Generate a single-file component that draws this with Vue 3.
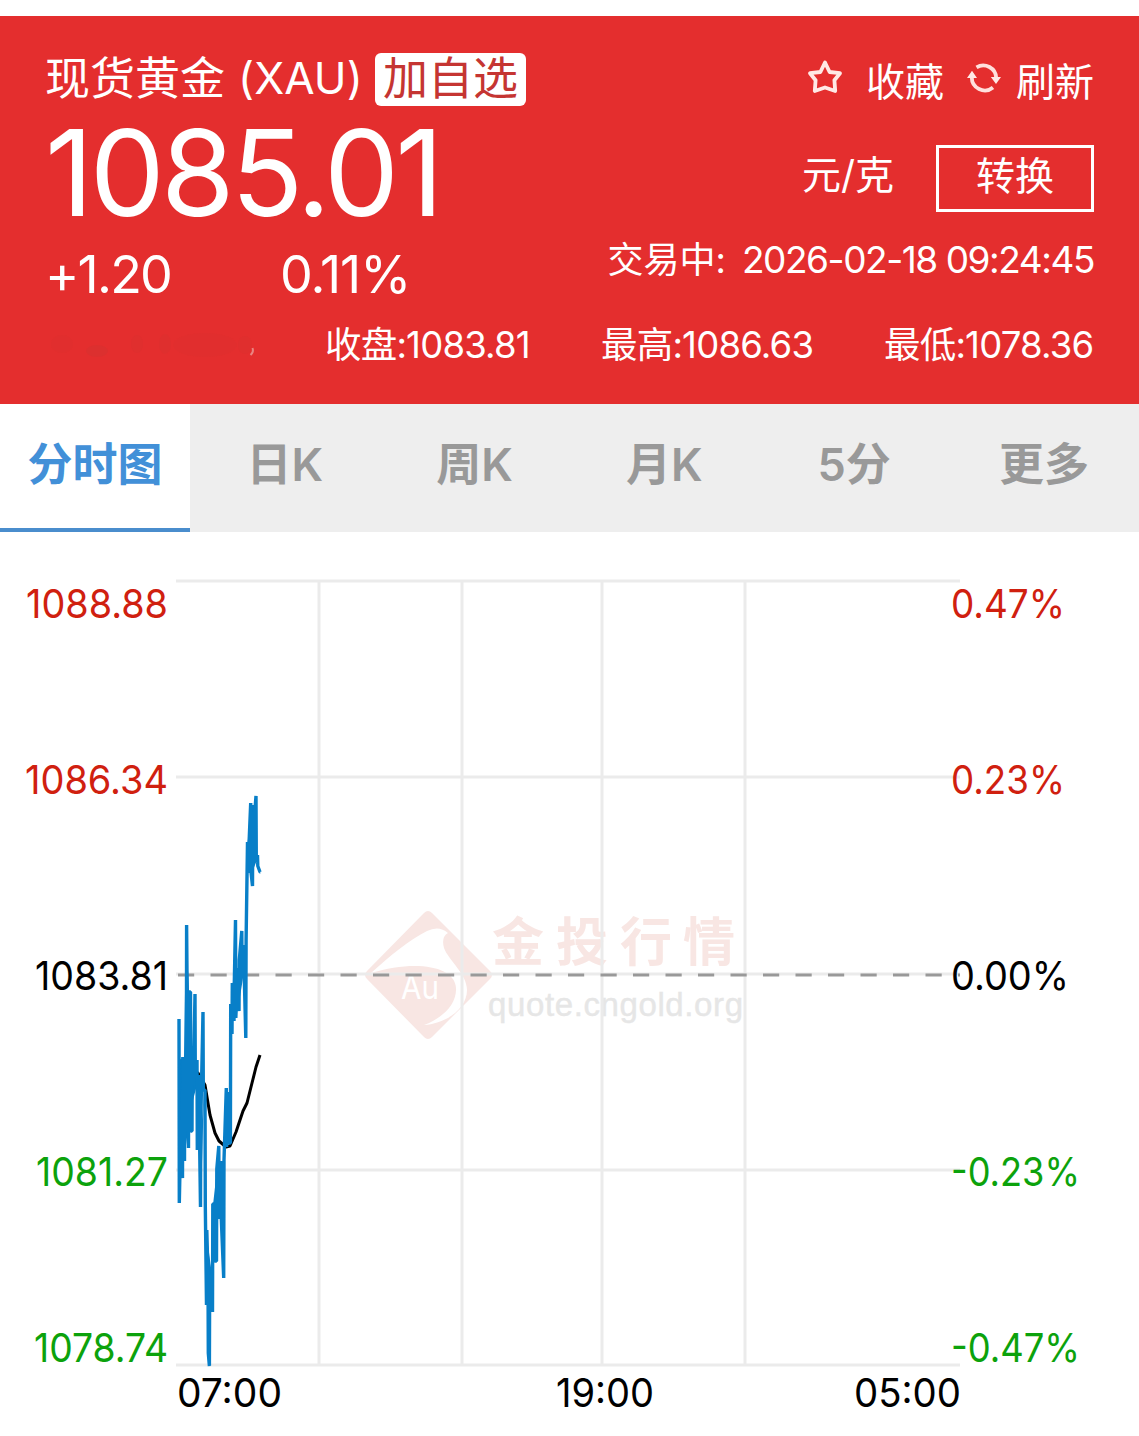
<script setup>
const stats = [
  { key: 'close', text: '收盘:1083.81' },
  { key: 'high', text: '最高:1086.63' },
  { key: 'low', text: '最低:1078.36' },
]

const tabs = ['分时图', '日K', '周K', '月K', '5分', '更多']

const rows = [581, 777, 974, 1170, 1365]
const columns = [319, 462, 602, 745]

const labels = [
  { text: '1088.88', x: 26, y: 618, w: 142, tone: 'up' },
  { text: '1086.34', x: 25, y: 794, w: 143, tone: 'up' },
  { text: '1083.81', x: 35, y: 990, w: 133, tone: 'flat' },
  { text: '1081.27', x: 36, y: 1186, w: 132, tone: 'down' },
  { text: '1078.74', x: 34, y: 1362, w: 134, tone: 'down' },
  { text: '0.47%', x: 951, y: 618, w: 114, tone: 'up' },
  { text: '0.23%', x: 951, y: 794, w: 114, tone: 'up' },
  { text: '0.00%', x: 951, y: 990, w: 118, tone: 'flat' },
  { text: '-0.23%', x: 951, y: 1186, w: 129, tone: 'down' },
  { text: '-0.47%', x: 951, y: 1362, w: 129, tone: 'down' },
  { text: '07:00', x: 177, y: 1407, w: 105, tone: 'flat' },
  { text: '19:00', x: 556, y: 1407, w: 98, tone: 'flat' },
  { text: '05:00', x: 854, y: 1407, w: 107, tone: 'flat' },
]

// [x, first value, second value] for each tick of the session
const ticks = [
  [179, 1019, 1203], [181, 1120, 1172], [182.5, 1178, 1057], [184.5, 1161, 1057],
  [186.3, 1130, 925], [188.5, 1148, 992], [190.5, 992, 1131], [192, 1131, 1050],
  [193.5, 1085, 1060], [195, 994, 1078], [197, 1060, 1150], [199, 1075, 1120],
  [200.5, 1207, 1120], [203, 1012, 1090], [205, 1090, 1205], [206.5, 1305, 1230],
  [208, 1275, 1353], [209.4, 1366, 1275], [211.3, 1312, 1275], [212.5, 1312, 1204],
  [214.5, 1204, 1261], [216.5, 1261, 1169], [218.8, 1146, 1219], [221, 1161, 1219],
  [223.7, 1278, 1160], [226.3, 1088, 1147], [228.5, 1092, 1143], [230.4, 1143, 1004],
  [232, 1034, 983], [234, 1021, 983], [235.5, 920, 1018], [238, 968, 1003],
  [239, 1011, 960], [241.8, 931, 978], [244, 945, 978], [245.8, 1038, 940],
  [247.5, 842, 873], [250.7, 803, 872], [252.5, 886, 812], [254.5, 855, 812],
  [256, 796, 862], [257.5, 855, 866], [260, 872, 872],
]
const priceLine = ticks.map(([x, a, b]) => `${x},${a} ${x + 0.3},${b}`).join(' ')

// spans where neighbouring ticks merge into a solid band
const bands = [
  '179,1060 184,1057 186,930 189,990 191,1058 198,1070 197,1085 193,1100 192,1130 188,1130 184,1160 180,1170',
  '197,1075 202,1120 204,1090 201,1200',
  '206,1230 212,1275 211,1312 208,1350',
  '213,1205 218,1160 223,1165 224,1215 217,1220 215,1260',
  '226,1095 230,1092 230,1143 225,1147',
  '232,985 238,968 244,945 247,945 246,1000 243,978 239,1003 235,1018',
  '247,850 251,805 256,805 257,860 253,870 248,873',
]
</script>

<template>
  <main class="page">
    <header class="quote">
      <div class="top">
        <div class="left">
          <div class="title">
            <span class="name">现货黄金</span><span class="code">(XAU)</span>
            <span class="add">加自选</span>
          </div>
          <div class="price">1085.01</div>
          <div class="change"><span class="diff">+1.20</span><span class="pct">0.11%</span></div>
        </div>
        <div class="right">
          <div class="actions">
            <svg class="star" width="38" height="38" viewBox="0 0 38 38">
              <path d="M19 4.5 L23.6 14 L34 15.2 L28.4 22.2 L29.2 33 L19 29.5 L8.8 33 L9.6 22.2 L4 15.2 L14.4 14 Z" />
            </svg>
            <span class="fav">收藏</span>
            <svg class="refresh" width="34" height="34" viewBox="0 0 34 34">
              <path d="M9.5 6.3 A13 13 0 0 1 29.2 17" />
              <path d="M26 26.5 A13 13 0 0 1 4.8 16" />
              <path class="head" d="M23.8 16 H34 L29 23 Z M0 17 H10 L5 9.8 Z" />
            </svg>
            <span class="reload">刷新</span>
          </div>
          <div class="unit"><span>元/克</span><button class="convert">转换</button></div>
          <div class="time"><span class="state">交易中:</span><span class="stamp">2026-02-18 09:24:45</span></div>
        </div>
      </div>
      <div class="stats">
        <svg class="smudge" width="280" height="50" viewBox="45 320 280 50">
          <g fill="#d63230" opacity=".5">
            <ellipse cx="62" cy="344" rx="11" ry="9" opacity=".3" />
            <ellipse cx="97" cy="351" rx="11" ry="6" />
            <ellipse cx="137" cy="344" rx="6" ry="9" opacity=".5" />
            <ellipse cx="165" cy="344" rx="6" ry="10" opacity=".6" />
            <ellipse cx="205" cy="345" rx="32" ry="12" opacity=".3" />
            <ellipse cx="245" cy="345" rx="7" ry="9" opacity=".5" />
          </g>
          <path d="M252.5 348 Q254 352 250.5 355" stroke="#e98582" stroke-width="2" fill="none" />
        </svg>
        <span v-for="s in stats" :key="s.key" class="stat" :class="s.key">{{ s.text }}</span>
      </div>
    </header>

    <nav class="tabs">
      <a v-for="(t, i) in tabs" :key="t" class="tab" :class="{ active: i === 0 }">{{ t }}</a>
    </nav>

    <svg class="chart" width="1139" height="904" viewBox="0 532 1139 904">
      <g class="mark">
        <path d="M424 913 Q428 909 432 913 L490 971 Q494 975 490 979 L432 1037 Q428 1041 424 1037 L367 979 Q363 975 367 971 Z" />
        <path class="cut" d="M371 973 C390 956 409 940 427 931 Q439 925 448 933 Q441 937 444 948 C449 961 467 974 467 990 C467 1010 444 1024 424 1025 C443 1018 457 1004 456 988 C455 965 413 960 371 973 Z" />
        <text class="au" x="401" y="999" textLength="38" lengthAdjust="spacingAndGlyphs">Au</text>
        <text class="brand" x="492 556 620 683" y="961">金投行情</text>
        <text class="site" x="488" y="1016" textLength="255">quote.cngold.org</text>
      </g>
      <g class="grid">
        <path v-for="y in rows" :key="'r' + y" :d="`M176 ${y} H960`" />
        <path v-for="x in columns" :key="'c' + x" :d="`M${x} 581 V1365`" />
      </g>
      <path class="base" d="M178 975 H960" />
      <path class="average" d="M186 1131 L187 1100 L192 1080 L198 1073 L205 1085 L210 1115 L215 1133 L219 1141 L226 1147 L230 1146 L236 1132 L243 1111 L247 1103 L252 1083 L256 1067 L260 1055" />
      <polygon v-for="b in bands" :key="b" class="band" :points="b" />
      <polyline class="line" :points="priceLine" />
      <text
        v-for="l in labels" :key="l.text" class="label" :class="l.tone"
        :x="l.x" :y="l.y" :textLength="l.w" lengthAdjust="spacingAndGlyphs"
      >{{ l.text }}</text>
    </svg>
  </main>
</template>

<style>
body { margin: 0; background: #fff; }
</style>

<style scoped>
.page {
  width: 1139px;
  height: 1436px;
  padding-top: 16px;
  box-sizing: border-box;
  overflow: hidden;
  background: #fff;
  font-family: Inter, "Noto Sans CJK SC", sans-serif;
}
.quote {
  height: 388px;
  padding: 0 45px;
  box-sizing: border-box;
  background: #e42e2e;
  color: #fff;
  white-space: nowrap;
}
.top { display: flex; justify-content: space-between; height: 304px; }
.title { display: flex; align-items: center; height: 53px; margin-top: 37px; font-size: 45px; line-height: 50px; }
.name { width: 193px; padding-bottom: 2px; }
.code { width: 137px; padding-bottom: 4px; letter-spacing: .1px; font-size: 44px; }
.add {
  width: 151px;
  height: 53px;
  border-radius: 6px;
  background: #fff;
  color: #c53532;
  line-height: 51px;
  text-align: center;
}
.price { height: 136px; line-height: 135px; font-size: 119px; letter-spacing: -3.7px; }
.change { display: flex; height: 60px; line-height: 66px; font-size: 52px; letter-spacing: -1.8px; }
.diff { width: 235px; }
.pct { letter-spacing: -1px; }
.right { display: flex; flex-direction: column; align-items: flex-end; font-size: 39px; }
.actions { display: flex; align-items: center; height: 60px; margin-top: 33px; }
.star { margin-right: 22px; margin-bottom: 4px; fill: none; stroke: #ffe9e6; stroke-width: 3.8; stroke-linejoin: round; }
.fav { margin-right: 23px; }
.refresh { margin-right: 15px; margin-bottom: 2px; fill: none; stroke: #ffe0dd; stroke-width: 3.8; }
.refresh .head { fill: #ffe9e6; stroke: none; }
.unit { display: flex; height: 67px; margin-top: 36px; line-height: 60px; }
.convert {
  width: 158px;
  height: 67px;
  margin-left: 42px;
  padding: 0 0 6px;
  box-sizing: border-box;
  border: 3px solid #fff;
  background: none;
  color: inherit;
  font: inherit;
  line-height: 55px;
}
.time { display: flex; height: 50px; margin-top: 24px; line-height: 48px; font-size: 36px; }
.state { margin-right: 16px; }
.stamp { font-size: 37px; letter-spacing: -1.45px; }
.stats { display: flex; height: 50px; line-height: 50px; font-size: 36.5px; letter-spacing: -.8px; }
.smudge { flex: none; }
.close { width: 276px; }
.high { width: 283px; }
.tabs { display: flex; height: 128px; background: #eee; }
.tab {
  flex: 1;
  height: 128px;
  box-sizing: border-box;
  color: #999;
  font-size: 45px;
  font-weight: 600;
  line-height: 122px;
  text-align: center;
}
.active { background: #fff; color: #4290d8; border-bottom: 4px solid #4a8dcd; }
.chart { display: block; }
.grid path { stroke: #ebebeb; stroke-width: 3; }
.base { stroke: #999; stroke-width: 3; stroke-dasharray: 16.2 16.3; }
.line { fill: none; stroke: #087fc8; stroke-width: 3.4; stroke-linejoin: bevel; }
.band { fill: #087fc8; }
.average { fill: none; stroke: #000; stroke-width: 3; stroke-linejoin: round; }
.label { font-size: 40px; }
.up { fill: #d0200f; }
.flat { fill: #000; }
.down { fill: #0ca20c; }
.mark { fill: #f8e6e3; }
.mark .cut { fill: #fff; }
.au { fill: #fff; font-size: 32px; }
.brand { font-size: 52px; font-weight: 700; }
.site { fill: #e6e6e6; stroke: #e6e6e6; stroke-width: .4; font-family: "Liberation Sans", sans-serif; font-size: 33px; }
</style>
